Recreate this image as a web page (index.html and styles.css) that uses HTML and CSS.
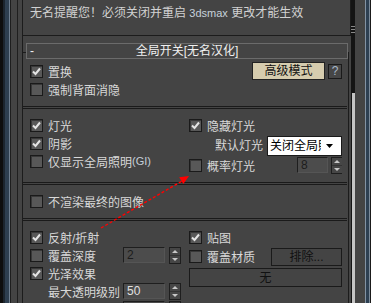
FILE: index.html
```html
<!DOCTYPE html>
<html lang="zh-CN">
	<head>
		<meta charset="UTF-8">
		<title>全局开关</title>
		<link rel="stylesheet" href="styles.css">
	</head>
	<body>
		<div class="frame">
			<div class="edge-left"></div>

			<div class="panel">
				<div class="note">无名提醒您！必须关闭并重启 <span class="latin">3dsmax</span> 更改才能生效</div>

				<div class="rollout">
					<div class="rollout-title">
						<span>-</span>
						<span>全局开关[无名汉化]</span>
						<span></span>
					</div>

					<div class="group group-first">
						<div class="col-left">
							<label class="row"><span class="cb checked"></span>置换</label>
							<label class="row"><span class="cb"></span>强制背面消隐</label>
						</div>
						<div class="col-right">
							<div class="row row-end">
								<button class="btn btn-accent">高级模式</button>
								<button class="btn btn-help">?</button>
							</div>
						</div>
					</div>

					<div class="sep"></div>

					<div class="group">
						<div class="col-left">
							<label class="row"><span class="cb checked"></span>灯光</label>
							<label class="row"><span class="cb checked"></span>阴影</label>
							<label class="row"><span class="cb"></span>仅显示全局照明<span class="latin">(GI)</span></label>
						</div>
						<div class="col-right">
							<label class="row"><span class="cb checked"></span>隐藏灯光</label>
							<div class="row row-end row-tall">
								<span class="field-label">默认灯光</span>
								<div class="select">
									<span class="select-text">关闭全局照明</span>
									<span class="select-arrow"></span>
								</div>
							</div>
							<div class="row">
								<span class="cb"></span>概率灯光
								<div class="spin spin-small">
									<span class="spin-field disabled">8</span>
									<span class="spin-btns"></span>
								</div>
							</div>
						</div>
					</div>

					<div class="sep"></div>

					<div class="group">
						<div class="col-left">
							<label class="row"><span class="cb"></span>不渲染最终的图像</label>
						</div>
					</div>

					<div class="sep"></div>

					<div class="group">
						<div class="col-left">
							<label class="row"><span class="cb checked"></span>反射/折射</label>
							<div class="row">
								<span class="cb"></span>覆盖深度
								<div class="spin">
									<span class="spin-field disabled">2</span>
									<span class="spin-btns"></span>
								</div>
							</div>
							<label class="row"><span class="cb checked"></span>光泽效果</label>
							<div class="row">
								<span class="indent">最大透明级别</span>
								<div class="spin">
									<span class="spin-field">50</span>
									<span class="spin-btns"></span>
								</div>
							</div>
							<div class="row">
								<div class="spin">
									<span class="spin-field"></span>
									<span class="spin-btns"></span>
								</div>
							</div>
						</div>
						<div class="col-right">
							<label class="row"><span class="cb checked"></span>贴图</label>
							<div class="row row-btn">
								<span class="cb"></span>覆盖材质
								<button class="btn btn-exclude">排除...</button>
							</div>
							<button class="btn btn-wide">无</button>
						</div>
					</div>
				</div>
			</div>

			<div class="scrollbar">
				<div class="scroll-thumb"></div>
				<div class="scroll-track"></div>
			</div>

			<div class="edge-right"></div>

			<svg class="pointer" width="371" height="303" viewBox="0 0 371 303">
				<line x1="101" y1="228" x2="183" y2="180.5" stroke="#ff0000" stroke-width="1.4" stroke-dasharray="3 2"/>
				<polygon points="189,176 183.3,184 179.2,177.2" fill="#ff0000"/>
			</svg>
		</div>
	</body>
</html>
```

FILE: styles.css
```css
body {
	margin: 0;
	background: #444;
	color: #d8d8d8;
	font: 12px "Liberation Sans", "Noto Sans CJK SC", sans-serif;
}

.frame {
	position: relative;
	display: flex;
	width: 371px;
	height: 303px;
	overflow: hidden;
}

.edge-left {
	flex: none;
	width: 22px;
	background: linear-gradient(to right, #0e0e0e 0 3px, #1c252e 3px 5px, #2e3f50 5px 9px, #6f7f8f 9px 10px, #1e1e1e 10px 11px, #444 11px 17px, #1f1f1f 17px 18px, #444 18px);
}

.edge-right {
	flex: none;
	width: 16px;
	background: linear-gradient(to right, #444 0 10px, #8393a3 10px 11px, #2e4052 11px 14px, #7b8a99 14px 15px, #1a1a1a 15px);
}

.panel {
	flex: none;
	width: 328px;
	border-left: 1px solid #1c1c1c;
}

.note {
	height: 35px;
	padding-left: 7px;
	line-height: 26px;
	white-space: nowrap;
	color: #d2d2d2;
	border-right: 1px solid #1c1c1c;
	border-bottom: 1px solid #1c1c1c;
}
.latin {
	font-size: 11px;
	color: #c6d0da;
}

.rollout {
	margin: 16px 2px 0 0;
	border-top: 1px solid #1c1c1c;
	border-right: 1px solid #1c1c1c;
}

.rollout-title {
	display: grid;
	grid-template-columns: 1fr auto 1fr;
	height: 14px;
	margin: -10px 0 0 3px;
	padding: 0 3px;
	line-height: 14px;
	color: #f0f0f0;
	background: #444;
	border: 1px solid #6b6b6b;
}

.group {
	display: flex;
	gap: 8px;
	padding: 7px 6px 8px 7px;
}
.group-first {
	padding-top: 3px;
}
.col-left {
	width: 151px;
	flex: none;
}
.col-right {
	width: 153px;
	flex: none;
}

.sep {
	height: 1px;
	margin-right: 1px;
	border-top: 1px solid #1a1a1a;
	border-bottom: 1px solid #1a1a1a;
}

.row {
	display: flex;
	align-items: center;
	height: 18px;
	white-space: nowrap;
}
.row-end {
	justify-content: flex-end;
}
.row-tall {
	height: 22px;
	align-items: flex-end;
}
.row-btn {
	height: 20px;
}

.cb {
	flex: none;
	width: 11px;
	height: 11px;
	margin-right: 5px;
	background: #585858;
	border: 1px solid #1a1a1a;
	box-shadow: inset 1px 1px 0 #383838;
}
.cb.checked {
	background: #585858 url("data:image/svg+xml,%3Csvg xmlns='http://www.w3.org/2000/svg' width='11' height='11'%3E%3Cpolyline points='2,5.5 4.5,8 9,2.5' fill='none' stroke='%23e4e4e4' stroke-width='2'/%3E%3C/svg%3E") no-repeat;
}

.indent {
	margin-left: 18px;
}
.field-label {
	margin: 0 4px 3px 0;
}

.btn {
	height: 18px;
	padding: 0;
	font: inherit;
	line-height: 16px;
	color: #111;
	background: #444;
	border: 1px solid #1a1a1a;
}
.btn-accent {
	width: 73px;
	background: #d6ccae;
	border-color: #222;
}
.btn-help {
	width: 14px;
	height: 15px;
	margin-left: 3px;
	line-height: 13px;
	color: #a9b9c9;
	background: #464646;
}
.btn-exclude {
	width: 71px;
	margin: 2px 0 0 auto;
}
.btn-wide {
	display: block;
	width: 153px;
	height: 19px;
	margin-top: 2px;
}

.select {
	display: flex;
	width: 73px;
	height: 18px;
	color: #000;
	background: #fff;
	border: 1px solid #1a1a1a;
}
.select-text {
	width: 51px;
	padding-left: 2px;
	overflow: hidden;
	white-space: nowrap;
	line-height: 18px;
}
.select-arrow {
	flex: 1;
	background: url("data:image/svg+xml,%3Csvg xmlns='http://www.w3.org/2000/svg' width='7' height='4'%3E%3Cpolygon points='0,0 7,0 3.5,4' fill='%23000'/%3E%3C/svg%3E") no-repeat 5px 7px;
}

.spin {
	display: flex;
	gap: 4px;
	margin-left: auto;
}
.spin-field {
	width: 37px;
	height: 14px;
	padding-left: 3px;
	line-height: 14px;
	color: #e0e0e0;
	background: #4c4c4c;
	border: 1px solid #1e1e1e;
	border-right-color: #555;
	border-bottom-color: #555;
}
.spin-field.disabled {
	color: #1c1c1c;
}
.spin-btns {
	width: 12px;
	height: 17px;
	background: url("data:image/svg+xml,%3Csvg xmlns='http://www.w3.org/2000/svg' width='12' height='17'%3E%3Crect x='0.5' y='0.5' width='11' height='16' fill='%23464646' stroke='%231e1e1e'/%3E%3Cline x1='1' y1='8.5' x2='11' y2='8.5' stroke='%23333'/%3E%3Cpolygon points='3,6 9,6 6,3' fill='%23c8c8c8'/%3E%3Cpolygon points='3,11 9,11 6,14' fill='%23c8c8c8'/%3E%3C/svg%3E") no-repeat;
}
.spin-small {
	gap: 3px;
}
.spin-small .spin-field {
	width: 26px;
}
.spin-small .spin-btns {
	width: 11px;
}

.scrollbar {
	display: flex;
	flex-direction: column;
	flex: none;
	width: 4px;
}
.scroll-thumb {
	height: 93px;
	background: linear-gradient(#141414 0 26px, #888 26px 27px, #141414 27px 29px, #888 29px 30px, #141414 30px 32px, #888 32px 33px, #141414 33px);
}
.scroll-track {
	flex: 1;
	background: linear-gradient(to right, #141414 0 1px, #c4c4c4 1px);
}

.pointer {
	position: absolute;
	top: 0;
	left: 0;
	pointer-events: none;
}
```
